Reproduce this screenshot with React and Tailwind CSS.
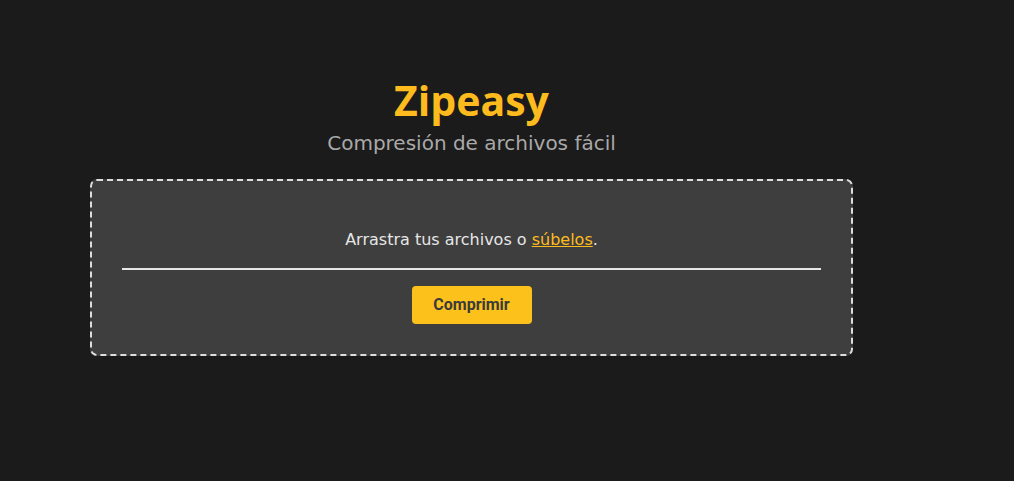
export default function App() {
    return (
        <div className="min-h-screen bg-[#1b1b1b] pt-[72px] pl-[90px]" style={{ fontFamily: "'DejaVu Sans', sans-serif" }}>
            <div className="w-[763px] flex flex-col items-center">
                <h1 className="text-[41px] leading-[56px] font-bold text-[#fdbb1e]" style={{ fontFamily: "'Open Sans', sans-serif" }}>Zipeasy</h1>
                <p className="text-[20px] leading-[28px] text-[#a9a9a9] mt-[1px]">Compresión de archivos fácil</p>
                <div className="mt-[22px] w-full h-[177px] bg-[#3e3e3e] border-2 border-dashed border-[#dedede] rounded-[7px] px-[30px] pt-[47px] flex flex-col items-center">
                    <p className="text-[16px] leading-[24px] text-[#e6e6e6]">
                        Arrastra tus archivos o{" "}
                        <a href="#" className="text-[#fdbb1e] underline">súbelos</a>.
                    </p>
                    <div className="w-full h-[2px] bg-[#e6e6e6] mt-[16px]" />
                    <button className="mt-[16px] w-[120px] h-[38px] bg-[#fdc11c] rounded-[4px] text-[16px] font-bold text-[#3a3a3a]" style={{ fontFamily: "Roboto, sans-serif" }}>
                        Comprimir
                    </button>
                </div>
            </div>
        </div>
    )
}
